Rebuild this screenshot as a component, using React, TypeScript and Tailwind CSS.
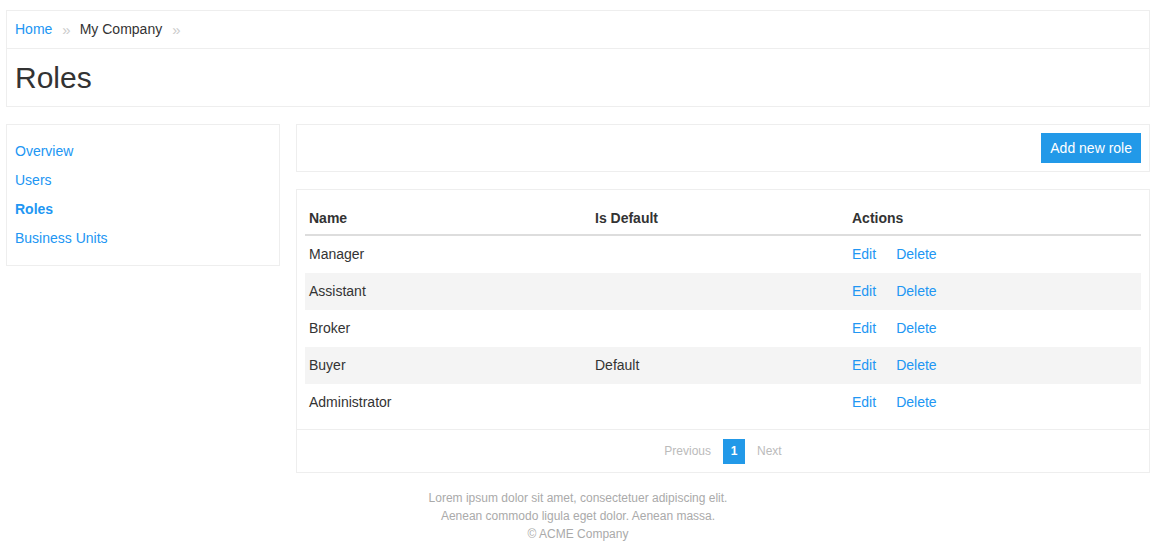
const roles = [
  { name: "Manager", isDefault: false },
  { name: "Assistant", isDefault: false },
  { name: "Broker", isDefault: false },
  { name: "Buyer", isDefault: true },
  { name: "Administrator", isDefault: false },
];

const navItems = ["Overview", "Users", "Roles", "Business Units"];

function Separator() {
  return <span className="ml-[10px] mr-[9px] text-[15px] leading-none text-[#cccccc]">»</span>;
}

export default function App() {
  return (
    <div className="min-h-screen bg-white px-[6px] pt-[10px] font-['Liberation_Sans',Arial,sans-serif] text-[14px] text-[#333333]">
      <div className="border border-[#eeeeee]">
        <div className="flex h-[38px] items-center border-b border-[#eeeeee] px-[8px]">
          <a href="#" className="text-[#2196f3]">Home</a>
          <Separator />
          <span>My Company</span>
          <Separator />
        </div>
        <h1 className="flex h-[57px] items-center px-[8px] text-[30px] leading-none">Roles</h1>
      </div>

      <div className="mt-[17px] flex items-start gap-[16px]">
        <div className="w-[274px] shrink-0 border border-[#eeeeee] px-[8px] pb-[12px] pt-[12px]">
          {navItems.map((item) => (
            <a
              key={item}
              href="#"
              className={`flex h-[29px] items-center text-[#2196f3] ${item === "Roles" ? "font-bold" : ""}`}
            >
              {item}
            </a>
          ))}
        </div>

        <div className="flex-1">
          <div className="flex h-[48px] items-center justify-end border border-[#eeeeee] px-[8px]">
            <button className="h-[30px] bg-[#2299e8] px-[9px] text-[14px] text-white">Add new role</button>
          </div>

          <div className="mt-[17px] border border-[#eeeeee]">
            <div className="px-[8px] pb-[8px] pt-[8px]">
              <table className="w-full border-collapse text-left leading-[21px]">
                <thead>
                  <tr className="border-b-2 border-[#dddddd]">
                    <th className="w-[286px] px-[4px] pb-[5px] pt-[10px] font-bold">Name</th>
                    <th className="w-[257px] px-[4px] pb-[5px] pt-[10px] font-bold">Is Default</th>
                    <th className="px-[4px] pb-[5px] pt-[10px] font-bold">Actions</th>
                  </tr>
                </thead>
                <tbody>
                  {roles.map((r, i) => (
                    <tr key={r.name} className={i % 2 === 1 ? "bg-[#f4f4f4]" : ""}>
                      <td className="px-[4px] py-[8px]">{r.name}</td>
                      <td className="px-[4px] py-[8px]">{r.isDefault ? "Default" : ""}</td>
                      <td className="px-[4px] py-[8px]">
                        <a href="#" className="mr-[20px] text-[#2196f3]">Edit</a>
                        <a href="#" className="text-[#2196f3]">Delete</a>
                      </td>
                    </tr>
                  ))}
                </tbody>
              </table>
            </div>
            <div className="flex h-[43px] items-center justify-center gap-[12px] border-t border-[#eeeeee] text-[12px]">
              <span className="text-[#bbbbbb]">Previous</span>
              <span className="flex h-[25px] w-[22px] items-center justify-center bg-[#2299e8] font-bold text-white">1</span>
              <span className="text-[#bbbbbb]">Next</span>
            </div>
          </div>
        </div>
      </div>

      <footer className="pt-[16px] text-center text-[12px] leading-[18px] text-[#aaaaaa]">
        <p>Lorem ipsum dolor sit amet, consectetuer adipiscing elit.</p>
        <p>Aenean commodo ligula eget dolor. Aenean massa.</p>
        <p>© ACME Company</p>
      </footer>
    </div>
  );
}
